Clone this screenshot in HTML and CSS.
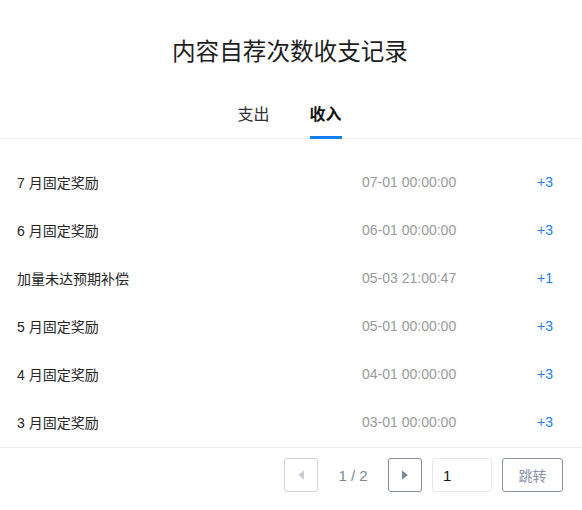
FILE: index.html
```html
<!DOCTYPE html>
<html lang="zh-CN">
<head>
<meta charset="utf-8">
<title>内容自荐次数收支记录</title>
<link rel="stylesheet" href="styles.css">
</head>
<body>
<div class="panel">
  <h1 class="title">内容自荐次数收支记录</h1>
  <div class="tabs">
    <div class="tab">支出</div>
    <div class="tab active">收入</div>
  </div>
  <div class="list">
    <div class="row"><span class="name">7 月固定奖励</span><span class="date">07-01 00:00:00</span><span class="amount">+3</span></div>
    <div class="row"><span class="name">6 月固定奖励</span><span class="date">06-01 00:00:00</span><span class="amount">+3</span></div>
    <div class="row"><span class="name">加量未达预期补偿</span><span class="date">05-03 21:00:47</span><span class="amount">+1</span></div>
    <div class="row"><span class="name">5 月固定奖励</span><span class="date">05-01 00:00:00</span><span class="amount">+3</span></div>
    <div class="row"><span class="name">4 月固定奖励</span><span class="date">04-01 00:00:00</span><span class="amount">+3</span></div>
    <div class="row"><span class="name">3 月固定奖励</span><span class="date">03-01 00:00:00</span><span class="amount">+3</span></div>
  </div>
  <div class="pager">
    <button class="pbtn disabled" aria-label="上一页">
      <svg width="8" height="10" viewBox="0 0 8 10"><path d="M7 0.5 L1 5 L7 9.5 Z" fill="#c8cdd6"/></svg>
    </button>
    <span class="pinfo">1 / 2</span>
    <button class="pbtn" aria-label="下一页">
      <svg width="8" height="10" viewBox="0 0 8 10"><path d="M1 0.5 L7 5 L1 9.5 Z" fill="#7e889c"/></svg>
    </button>
    <input class="pinput" type="text" value="1">
    <button class="jump">跳转</button>
  </div>
</div>
</body>
</html>
```

FILE: styles.css
```css
html, body {
  margin: 0;
  padding: 0;
  background: #ffffff;
}
body {
  font-family: "Liberation Sans", "Noto Sans CJK SC", sans-serif;
  color: #333333;
}
.panel {
  width: 582px;
}
.title {
  margin: 0;
  padding-top: 34px;
  padding-right: 2px;
  font-family: "Noto Sans CJK SC", sans-serif;
  font-size: 23.6px;
  font-weight: 400;
  line-height: 32px;
  text-align: center;
  color: #1e1e1e;
}
.tabs {
  margin-top: 36px;
  display: flex;
  justify-content: center;
  gap: 40px;
  padding-right: 3px;
  border-bottom: 1px solid #f0f0f0;
  height: 36px;
  box-sizing: content-box;
}
.tab {
  position: relative;
  font-family: "Noto Sans CJK SC", sans-serif;
  font-size: 16px;
  line-height: 22px;
  height: 36px;
  box-sizing: border-box;
  color: #333333;
}
.tab.active {
  font-weight: 700;
  color: #111111;
}
.tab.active::after {
  content: "";
  position: absolute;
  left: 0;
  right: 0;
  bottom: -1px;
  height: 3px;
  background: #1180ff;
}
.list {
  padding-top: 19px;
  padding-bottom: 1px;
  border-bottom: 1px solid #ececec;
}
.row {
  display: grid;
  grid-template-columns: 1fr 96px 95px;
  align-items: center;
  height: 48px;
  padding: 0 29px 0 17px;
  font-size: 14px;
}
.name {
  font-family: "Liberation Sans", "Noto Sans CJK SC", sans-serif;
  font-size: 14px;
  color: #262626;
}
.date {
  font-family: "Liberation Sans", sans-serif;
  color: #9a9a9a;
  white-space: nowrap;
}
.amount {
  font-family: "Liberation Sans", sans-serif;
  color: #1a7cf5;
  text-align: right;
}
.pager {
  display: flex;
  justify-content: flex-end;
  align-items: center;
  padding: 10px 19px 0 0;
}
.pbtn {
  width: 34px;
  height: 34px;
  box-sizing: border-box;
  border: 1px solid #828ba0;
  border-radius: 3px;
  background: #ffffff;
  padding: 0;
  display: flex;
  align-items: center;
  justify-content: center;
}
.pbtn.disabled {
  border-color: #d0d4dc;
}
.pinfo {
  width: 70px;
  text-align: center;
  font-family: "Liberation Sans", sans-serif;
  font-size: 15px;
  color: #7e889c;
}
.pinput {
  margin-left: 10px;
  width: 60px;
  height: 34px;
  box-sizing: border-box;
  border: 1px solid #e7e9ed;
  border-radius: 3px;
  padding: 0 0 0 10px;
  font-family: "Liberation Sans", sans-serif;
  font-size: 15px;
  color: #111111;
  outline: none;
}
.jump {
  margin-left: 10px;
  width: 61px;
  height: 34px;
  box-sizing: border-box;
  border: 1px solid #8a92a6;
  border-radius: 3px;
  background: #ffffff;
  font-family: "Noto Sans CJK SC", sans-serif;
  font-size: 14px;
  color: #8a92a6;
  padding: 0;
}
```
